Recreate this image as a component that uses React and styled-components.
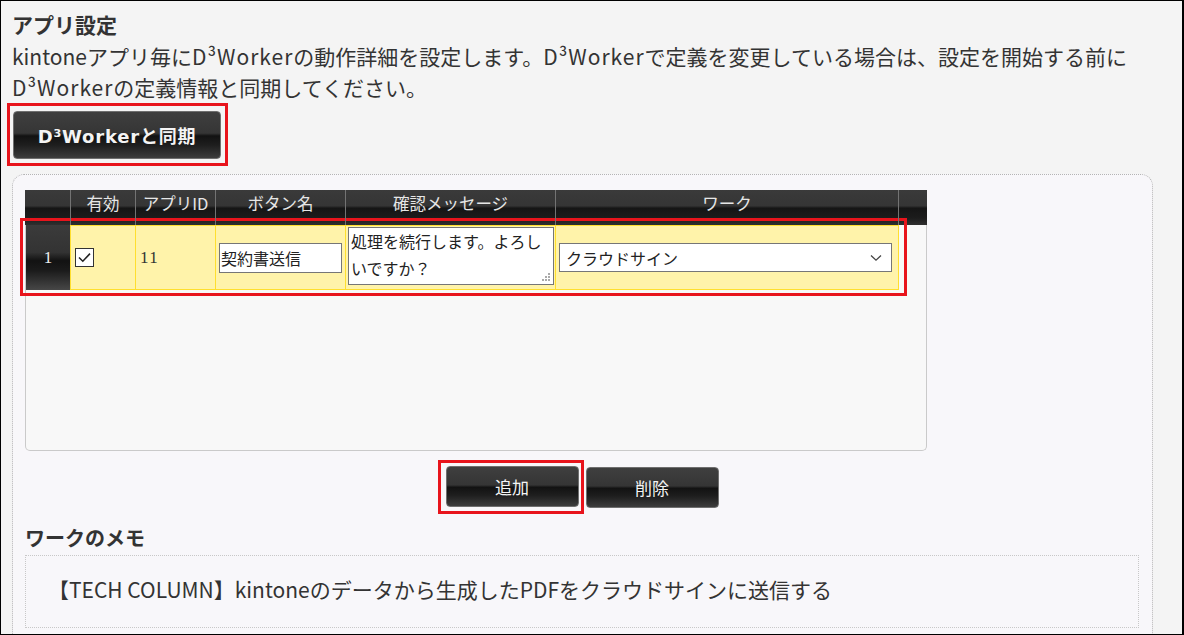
import React from 'react';
import styled, { createGlobalStyle } from 'styled-components';

const GlobalStyle = createGlobalStyle`
    html, body {
        margin: 0;
        padding: 0;
        background: #f4f4f4;
    }
    * {
        box-sizing: border-box;
    }
`

const columns = [
    { key: 'no', label: '', width: 44 },
    { key: 'enabled', label: '有効', width: 65 },
    { key: 'appId', label: 'アプリID', width: 80 },
    { key: 'button', label: 'ボタン名', width: 130 },
    { key: 'message', label: '確認メッセージ', width: 210 },
    { key: 'work', label: 'ワーク', width: 344 },
]

const rows = [
    {
        id: 1,
        enabled: true,
        appId: '11',
        button: '契約書送信',
        message: '処理を続行します。よろしいですか？',
        work: 'クラウドサイン',
    },
]

const gridTemplate = columns.map(c => `${c.width}px`).join(' ')

function App() {
    return (
        <Frame>
            <GlobalStyle />
            <Heading>アプリ設定</Heading>
            <Description>
                kintoneアプリ毎に<Brand>D³Worker</Brand>の動作詳細を設定します。<Brand>D³Worker</Brand>で定義を変更している場合は、設定を開始する前に<Brand>D³Worker</Brand>の定義情報と同期してください。
            </Description>
            <Highlight $pad="5px 4px 4px 3px" $offset="-5px">
                <GlossButton $w={208} $h={48} $bold>D³Workerと同期</GlossButton>
            </Highlight>

            <Panel>
                <TableBox>
                    <HeadRow>
                        {columns.map(col => (
                            <HeadCell key={col.key}>{col.label}</HeadCell>
                        ))}
                        <HeadCell />
                    </HeadRow>
                    <TableBody>
                        <RowHighlight>
                            {rows.map(row => (
                                <DataRow key={row.id}>
                                    <NoCell>{row.id}</NoCell>
                                    <Cell>
                                        <CheckBox>
                                            {row.enabled && (
                                                <svg width="13" height="11" viewBox="0 0 13 11">
                                                    <path d="M1 5.5 L4.8 9.2 L12 1.6" fill="none" stroke="#222" strokeWidth="1.6" />
                                                </svg>
                                            )}
                                        </CheckBox>
                                    </Cell>
                                    <Cell><SerifText>{row.appId}</SerifText></Cell>
                                    <Cell $pl={3}><TextInput defaultValue={row.button} /></Cell>
                                    <Cell $pl={2} $top>
                                        <AreaWrap>
                                            <TextArea defaultValue={row.message} />
                                            <Grip width="9" height="9" viewBox="0 0 9 9">
                                                <rect x="6" y="0" width="2" height="2" fill="#aaa" />
                                                <rect x="3" y="3" width="2" height="2" fill="#aaa" />
                                                <rect x="6" y="3" width="2" height="2" fill="#aaa" />
                                                <rect x="0" y="6" width="2" height="2" fill="#aaa" />
                                                <rect x="3" y="6" width="2" height="2" fill="#aaa" />
                                                <rect x="6" y="6" width="2" height="2" fill="#aaa" />
                                            </Grip>
                                        </AreaWrap>
                                    </Cell>
                                    <Cell $pl={3} $last>
                                        <SelectBox>
                                            <span>{row.work}</span>
                                            <svg width="12" height="8" viewBox="0 0 12 8">
                                                <path d="M1 1.5 L6 6.2 L11 1.5" fill="none" stroke="#444" strokeWidth="1.3" />
                                            </svg>
                                        </SelectBox>
                                    </Cell>
                                </DataRow>
                            ))}
                        </RowHighlight>
                    </TableBody>
                </TableBox>

                <ButtonRow>
                    <Highlight $pad="3px 2px 4px 5px">
                        <GlossButton $w={133} $h={41}>追加</GlossButton>
                    </Highlight>
                    <GlossButton $w={133} $h={41}>削除</GlossButton>
                </ButtonRow>

                <SubHeading>ワークのメモ</SubHeading>
                <MemoBox>【TECH COLUMN】kintoneのデータから生成したPDFをクラウドサインに送信する</MemoBox>
            </Panel>
        </Frame>
    );
}

const Frame = styled.div`
    width: 1184px;
    height: 635px;
    overflow: hidden;
    border: 1px solid #000;
    border-right-width: 2px;
    padding: 10px 0 0 11px;
    background: #f4f4f4;
    color: #333;
    font-family: "Noto Sans CJK JP", "Noto Sans", sans-serif;
`

const Heading = styled.h2`
    margin: 0;
    font-size: 21px;
    line-height: 26px;
    font-weight: bold;
    color: #333;
`

const Description = styled.p`
    margin: 4px 0 0;
    width: 1140px;
    font-size: 21px;
    line-height: 31px;
`

const Brand = styled.span`
    letter-spacing: 1px;
`

const Highlight = styled.div`
    display: flex;
    align-items: flex-start;
    width: fit-content;
    border: 3px solid #e8141c;
    padding: ${p => p.$pad};
    margin-left: ${p => p.$offset || '0'};
`

const GlossButton = styled.button`
    display: block;
    flex: none;
    width: ${p => p.$w}px;
    height: ${p => p.$h}px;
    border: 1px solid #6f6f6f;
    border-radius: 4px;
    background: linear-gradient(to bottom, #3f3f3f 0%, #353535 46%, #121212 52%, #1e1e1e 72%, #3d3d3d 100%);
    color: #f4f4f4;
    font-family: ${p => (p.$bold ? '"DejaVu Sans", ' : '')}"Noto Sans CJK JP", sans-serif;
    font-size: ${p => (p.$bold ? 18 : 17)}px;
    letter-spacing: ${p => (p.$bold ? '0.8px' : 'normal')};
    font-weight: ${p => (p.$bold ? 'bold' : 'normal')};
    padding: 0;
    cursor: pointer;
`

const Panel = styled.section`
    margin-top: 8px;
    width: 1141px;
    min-height: 480px;
    border: 1px dotted #b4b4b4;
    border-radius: 12px;
    background: #f8f7fa;
    padding: 15px 12px 0 12px;
`

const TableBox = styled.div`
    width: 902px;
`

const HeadRow = styled.div`
    display: grid;
    grid-template-columns: 45px 65px 80px 130px 210px 343px 29px;
    height: 35px;
    background: linear-gradient(to bottom, #3a3a3a 0%, #353535 45%, #151515 52%, #1c1c1c 80%, #2f2f2f 100%);
`

const HeadCell = styled.div`
    color: #e6e6e6;
    font-size: 16.5px;
    line-height: 26px;
    text-align: center;
    & + & {
        border-left: 1px solid #737373;
    }
`

const TableBody = styled.div`
    display: flow-root;
    height: 226px;
    border: 1px solid #cacaca;
    border-top: none;
    border-radius: 0 0 5px 5px;
    background: #f8f8f8;
`

const RowHighlight = styled.div`
    display: block;
    width: fit-content;
    margin: -7px 0 0 -6px;
    border: 3px solid #e8141c;
    padding: 4px 5px 3px 3px;
`

const DataRow = styled.div`
    display: grid;
    grid-template-columns: ${gridTemplate};
    height: 65px;
    background: #fff3aa;
    border-top: 1px solid #ffdf2e;
    border-bottom: 1px solid #ffdf2e;
`

const Cell = styled.div`
    display: flex;
    align-items: ${p => (p.$top ? 'flex-start' : 'center')};
    padding: ${p => (p.$top ? '1px' : '0')} 0 0 ${p => p.$pl ?? 4}px;
    border-left: 1px solid #ffdf2e;
    border-right: ${p => (p.$last ? '1px solid #ffdf2e' : 'none')};
`

const NoCell = styled.div`
    display: flex;
    align-items: center;
    justify-content: center;
    margin-top: -1px;
    margin-bottom: -1px;
    background: linear-gradient(to bottom, #3b3b3b 0%, #333 42%, #121212 55%, #1b1b1b 70%, #474747 100%);
    color: #eee;
    font-family: "Liberation Serif", serif;
    font-size: 17px;
`

const CheckBox = styled.span`
    display: flex;
    align-items: center;
    justify-content: center;
    width: 19px;
    height: 19px;
    border: 1px solid #333;
    background: #fff;
`

const SerifText = styled.span`
    font-family: "Liberation Serif", serif;
    font-size: 17px;
    letter-spacing: 1.5px;
    color: #333;
`

const TextInput = styled.input`
    width: 123px;
    height: 30px;
    border: 1px solid #767676;
    padding: 0 1px;
    font-family: inherit;
    font-size: 16px;
    color: #222;
    background: #fff;
    outline: none;
`

const AreaWrap = styled.span`
    position: relative;
    display: block;
`

const TextArea = styled.textarea`
    display: block;
    width: 206px;
    height: 58px;
    border: 1px solid #767676;
    padding: 0 2px;
    resize: none;
    overflow: hidden;
    font-family: inherit;
    font-size: 16px;
    line-height: 27px;
    color: #222;
    background: #fff;
`

const Grip = styled.svg`
    position: absolute;
    right: 3px;
    bottom: 3px;
`

const SelectBox = styled.div`
    width: 333px;
    height: 29px;
    display: flex;
    align-items: center;
    justify-content: space-between;
    padding: 0 9px 0 6px;
    border: 1px solid #767676;
    background: #fff;
    font-size: 16px;
    color: #222;
`

const ButtonRow = styled.div`
    display: flex;
    align-items: center;
    justify-content: center;
    gap: 2px;
    padding-right: 9px;
    margin-top: 9px;
`

const SubHeading = styled.h3`
    margin: 11px 0 0;
    font-size: 20px;
    line-height: 26px;
    font-weight: bold;
    color: #333;
`

const MemoBox = styled.div`
    margin-top: 4px;
    width: 1114px;
    border: 1px dotted #c8c8c8;
    padding: 20px 22px 25px;
    font-size: 21px;
    line-height: 26px;
    color: #333;
`

export default App;
